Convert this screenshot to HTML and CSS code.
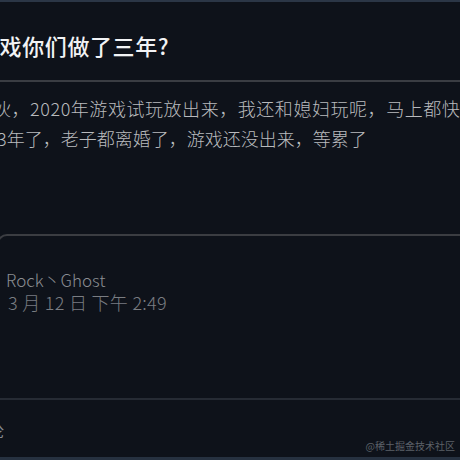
FILE: index.html
```html
<!DOCTYPE html>
<html lang="zh-CN">
<head>
<meta charset="utf-8">
<title>Post</title>
<link rel="stylesheet" href="styles.css">
</head>
<body>
<div class="page">
  <div class="topbar"></div>
  <h1 class="title">游戏你们做了三年?</h1>
  <div class="divider"></div>
  <div class="content">
    <p class="line line1">伙，2020年游戏试玩放出来，我还和媳妇玩呢，马上都快</p>
    <p class="line line2">3年了，老子都离婚了，游戏还没出来，等累了</p>
  </div>
  <div class="reply">
    <div class="author">Rock丶Ghost</div>
    <div class="date">3 月 12 日 下午 2:49</div>
  </div>
  <div class="footer">
    <div class="comment">评论</div>
    <div class="watermark">@稀土掘金技术社区</div>
  </div>
  <div class="bottombar"></div>
</div>
</body>
</html>
```
FILE: styles.css
```css
html, body {
  margin: 0;
  padding: 0;
  background: #0e121a;
  width: 460px;
  height: 460px;
  overflow: hidden;
}
.page {
  width: 460px;
  height: 460px;
  display: flex;
  flex-direction: column;
  overflow: hidden;
  font-family: "Noto Sans CJK SC", "Noto Sans", sans-serif;
}
.topbar {
  height: 2px;
  background: #2b3646;
  flex: none;
}
.title {
  margin: 28px 0 0 -23px;
  font-size: 22px;
  line-height: 30px;
  font-weight: 500;
  letter-spacing: 0.6px;
  color: #f2f3f5;
  white-space: nowrap;
}
.divider {
  margin-top: 20px;
  height: 2px;
  background: #3a3d43;
  flex: none;
}
.content {
  margin-top: 11px;
}
.line {
  margin: 0;
  font-size: 18px;
  line-height: 30px;
  font-weight: 300;
  color: #b9bbbe;
  white-space: nowrap;
}
.line1 {
  margin-left: -7px;
  letter-spacing: 0.55px;
}
.line2 {
  margin-left: -3px;
}
.reply {
  margin: 81px 0 0 -3px;
  border-top: 2px solid #3b3d42;
  border-left: 2px solid #3b3d42;
  border-top-left-radius: 10px;
  padding: 32px 0 0 7px;
  height: 128px;
  flex: none;
}
.author {
  font-size: 17px;
  line-height: 23px;
  font-weight: 300;
  color: #8b8e93;
}
.date {
  font-size: 18px;
  line-height: 23px;
  font-weight: 300;
  letter-spacing: 0.3px;
  color: #7a7d82;
  padding-left: 2px;
}
.footer {
  margin-top: 2px;
  border-top: 2px solid #262b34;
  flex: 1;
  position: relative;
}
.comment {
  margin: 20px 0 0 -28px;
  font-size: 16px;
  line-height: 20px;
  color: #858a90;
  white-space: nowrap;
}
.watermark {
  position: absolute;
  right: 5px;
  bottom: 4px;
  font-size: 10px;
  line-height: 14px;
  color: #5c6168;
  white-space: nowrap;
}
.bottombar {
  height: 3px;
  background: #263140;
  flex: none;
}
```
